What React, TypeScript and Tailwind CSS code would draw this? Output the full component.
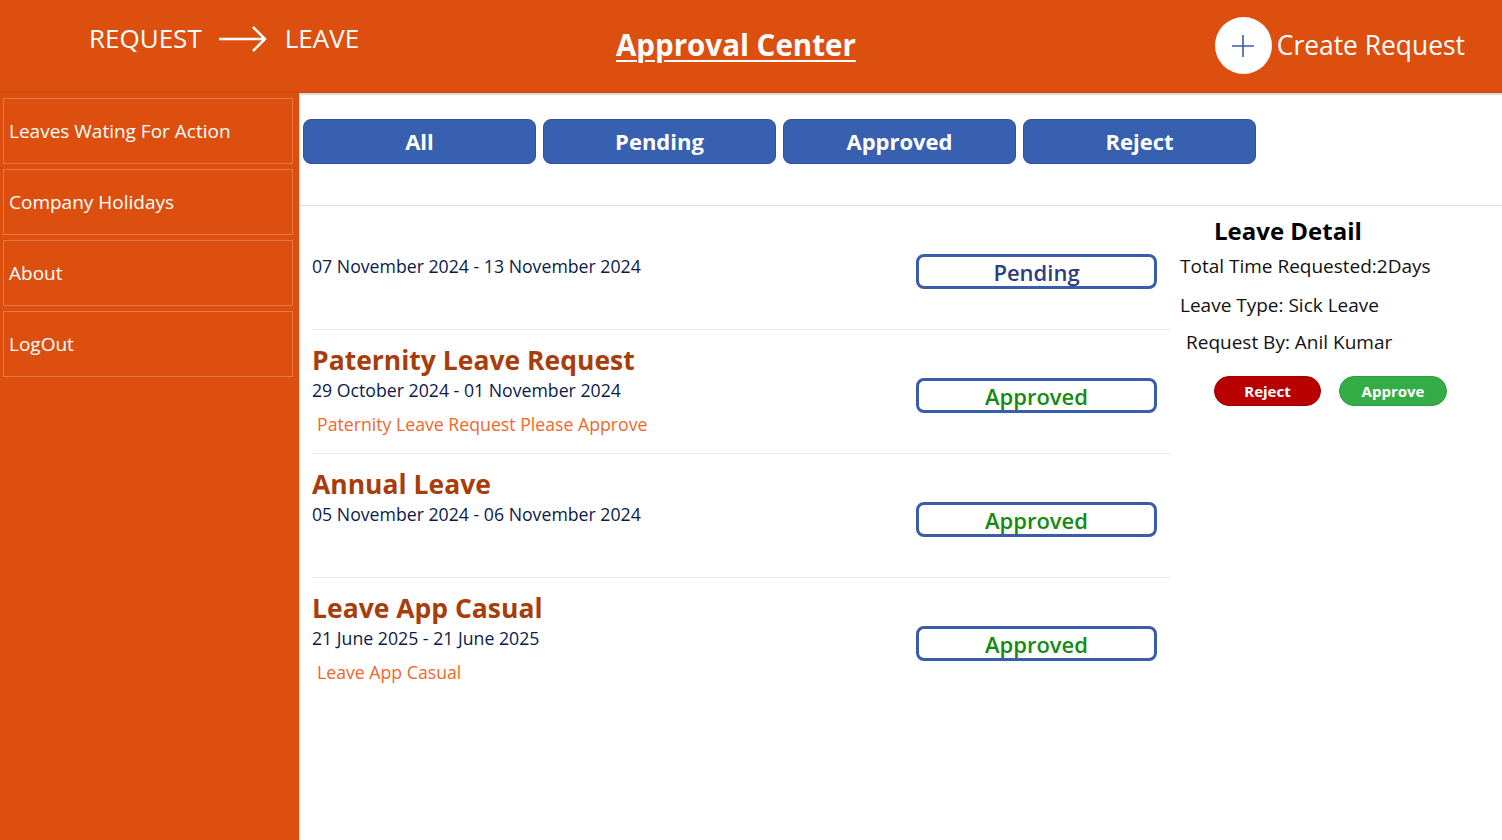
const tabs = ["All", "Pending", "Approved", "Reject"];

const menu = ["Leaves Wating For Action", "Company Holidays", "About", "LogOut"];

type Leave = {
  title: string;
  dates: string;
  note: string;
  status: "Pending" | "Approved";
};

const leaves: Leave[] = [
  { title: "", dates: "07 November 2024 - 13 November 2024", note: "", status: "Pending" },
  {
    title: "Paternity Leave Request",
    dates: "29 October 2024 - 01 November 2024",
    note: "Paternity Leave Request Please Approve",
    status: "Approved",
  },
  { title: "Annual Leave", dates: "05 November 2024 - 06 November 2024", note: "", status: "Approved" },
  {
    title: "Leave App Casual",
    dates: "21 June 2025 - 21 June 2025",
    note: "Leave App Casual",
    status: "Approved",
  },
];

function LeaveRow({ leave, last }: { leave: Leave; last: boolean }) {
  return (
    <div className={`flex h-[124px] ${last ? "" : "border-b border-[#e6e6e6]"}`}>
      <div className="flex-1 pt-[13px]">
        <div className="h-[34px] text-[26.5px] font-bold leading-[34px] text-[#a83d0c]">{leave.title}</div>
        <div className="h-[26px] text-[17.7px] leading-[26px] text-[#0c1a4b]">{leave.dates}</div>
        <div className="mt-[8px] pl-[5px] text-[17.7px] leading-[26px] text-[#f2662a]">{leave.note}</div>
      </div>
      <div className="mr-[13px] pt-[48px]">
        <div
          className={`flex h-[35px] w-[241px] items-center justify-center rounded-[8px] border-[3px] border-[#3a5cab] text-[22px] font-semibold leading-none ${
            leave.status === "Pending" ? "text-[#2c3f7c]" : "text-[#148a14]"
          }`}
        >
          {leave.status}
        </div>
      </div>
    </div>
  );
}

export default function App() {
  return (
    <div className="flex h-[840px] w-[1502px] flex-col overflow-hidden bg-white font-['Open_Sans',sans-serif]">
      <header className="flex h-[93px] shrink-0 items-center border-b-2 border-[#d24a0e] bg-[#dd4f0f] text-white">
        <div className="flex w-[616px] items-center pb-[14px] pl-[89px] text-[26px]">
          <span>REQUEST</span>
          <svg width="50" height="30" viewBox="0 0 50 30" className="ml-[16px] mr-[17px]">
            <path d="M1 15 H47 M35 3 L47 15 L35 27" fill="none" stroke="white" strokeWidth="2.5" />
          </svg>
          <span>LEAVE</span>
        </div>
        <div className="flex-1">
          <span className="text-[29.5px] font-bold underline decoration-2 underline-offset-4">Approval Center</span>
        </div>
        <div className="flex items-center pr-[37px]">
          <div className="flex h-[57px] w-[57px] items-center justify-center rounded-full bg-white">
            <svg width="26" height="26" viewBox="0 0 26 26">
              <path d="M13 2 V24 M2 13 H24" stroke="#3a5cab" strokeWidth="1.6" />
            </svg>
          </div>
          <span className="ml-[5px] text-[26.4px]">Create Request</span>
        </div>
      </header>

      <div className="flex flex-1">
        <aside className="flex w-[299px] shrink-0 flex-col gap-[5px] bg-[#dd4f0f] pl-[3px] pr-[6px] pt-[5px]">
          {menu.map((m) => (
            <div
              key={m}
              className="flex h-[66px] items-center border border-[#ea7846] pl-[5px] text-[19px] text-white"
            >
              {m}
            </div>
          ))}
        </aside>

        <main className="flex flex-1 flex-col border-t-2 border-l border-[#dcdcdc]">
          <div className="flex h-[111px] shrink-0 gap-[7px] border-b border-[#dcdcdc] pl-[3px] pt-[24px]">
            {tabs.map((t) => (
              <button
                key={t}
                className="h-[45px] w-[233px] rounded-[8px] border border-[#2f52a0] bg-[#3760b0] text-[22px] font-bold text-white"
              >
                {t}
              </button>
            ))}
          </div>

          <div className="flex flex-1">
            <div className="w-[870px] pl-[12px]">
              {leaves.map((l, i) => (
                <LeaveRow key={i} leave={l} last={i === leaves.length - 1} />
              ))}
            </div>
            <div className="flex-1 pl-[10px] pt-[10px] text-[19px] text-[#111]">
              <div className="pl-[34px] text-[24px] font-bold leading-[30px] text-black">Leave Detail</div>
              <div className="mt-[7px] leading-[26px]">Total Time Requested:2Days</div>
              <div className="mt-[13px] leading-[26px]">Leave Type: Sick Leave</div>
              <div className="mt-[11px] pl-[6px] leading-[26px]">Request By: Anil Kumar</div>
              <div className="mt-[21px] flex gap-[18px] pl-[34px]">
                <button className="h-[30px] w-[107px] rounded-full border border-[#a00000] bg-[#b80000] text-[15px] font-bold text-white">
                  Reject
                </button>
                <button className="h-[30px] w-[108px] rounded-full border border-[#2e9a3e] bg-[#34ad47] text-[15px] font-bold text-white">
                  Approve
                </button>
              </div>
            </div>
          </div>
        </main>
      </div>
    </div>
  );
}
